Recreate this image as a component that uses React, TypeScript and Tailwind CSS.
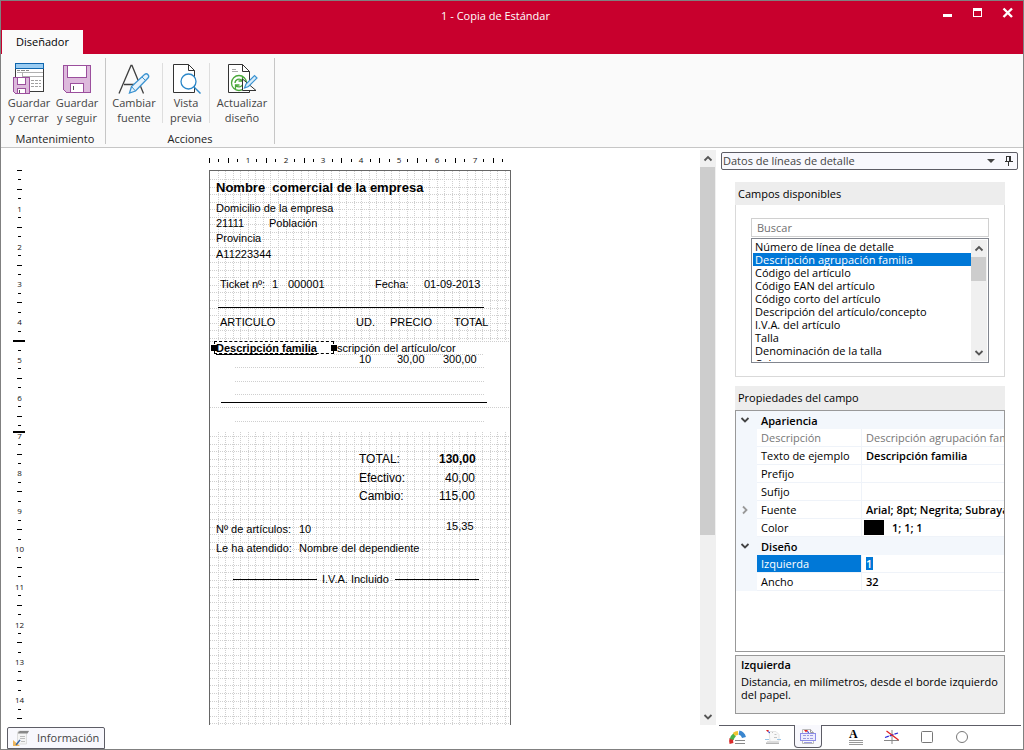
import type { ReactNode } from "react";

const MM = 3.78;
const CM_QUARTER = 9.45;

/* ---------- ribbon icons ---------- */

function SaveCloseIcon() {
  return (
    <svg width="32" height="32" viewBox="0 0 32 32" fill="none" shapeRendering="crispEdges">
      <rect x="2.5" y="0.5" width="28" height="28" fill="#fff" stroke="#3b3b3b" />
      <rect x="2.5" y="0.5" width="28" height="5" fill="#9accf2" stroke="#0f66ae" />
      <path d="M4 7.500h3M8 7.500h4M13 7.500h3" stroke="#8a8a8a" />
      <path d="M4 9.500h26M9.500 10v4M9 13.500h21" stroke="#b0b0b0" />
      <path d="M18 17.500h3M22 17.500h3M26 17.500h2M18 20.500h3M22 20.500h3M26 20.500h2M18 23.500h3M22 23.500h3M26 23.500h2" stroke="#a0a0a0" />
      <path d="M0.500 14.500h16v16h-14l-2-2z" fill="#ddb9dc" stroke="#9b4f9d" />
      <rect x="4.500" y="14.500" width="8" height="7" fill="#fff" stroke="#9b4f9d" />
      <rect x="4.500" y="25.500" width="8" height="5" fill="#fff" stroke="#9b4f9d" />
      <path d="M6.500 27v3" stroke="#555" />
    </svg>
  );
}

function SaveIcon() {
  return (
    <svg width="32" height="32" viewBox="0 0 32 32" fill="none" shapeRendering="crispEdges">
      <path d="M2.500 2.500h27v27h-24l-3-3z" fill="#ddb9dc" stroke="#9b4f9d" />
      <rect x="6.500" y="2.500" width="19" height="12" fill="#fff" stroke="#9b4f9d" />
      <rect x="9.500" y="20.500" width="13" height="9" fill="#fff" stroke="#9b4f9d" />
      <path d="M12.500 23v4" stroke="#555" />
    </svg>
  );
}

function FontIcon() {
  return (
    <svg width="32" height="32" viewBox="0 0 32 32" fill="none">
      <path d="M1 30.500L13 2.500h1L25.500 30.500M6 21.500h16" stroke="#3f3f3f" strokeWidth="1.300" />
      <path d="M11.500 30l2-6.500L26.500 11.500q2-1.500 3.500.2t0 3.300L17.500 28z" fill="#e6f2fb" stroke="#3b93d1" strokeWidth="1.300" />
      <path d="M13.500 23.500l4 4.500M24 14l3.500 3.500" stroke="#3b93d1" />
    </svg>
  );
}

function PreviewIcon() {
  return (
    <svg width="32" height="32" viewBox="0 0 32 32" fill="none">
      <path d="M3.500 1.500h15l6 6v22h-21z" fill="#fff" stroke="#333" />
      <path d="M18.500 1.500v6h6" stroke="#333" />
      <circle cx="18.500" cy="18.500" r="7.500" fill="#fff" stroke="#2b87c9" strokeWidth="1.300" />
      <path d="M24 24l6.500 6.500" stroke="#2b87c9" strokeWidth="1.400" />
    </svg>
  );
}

function RefreshDesignIcon() {
  return (
    <svg width="32" height="32" viewBox="0 0 32 32" fill="none">
      <path d="M2.500 1.500h14l7 7v21h-21z" fill="#fff" stroke="#333" />
      <path d="M16.500 1.500v7h7" stroke="#333" />
      <path d="M6 6.500h4M6 8.500h6" stroke="#aaa" />
      <circle cx="13" cy="20" r="7.500" stroke="#4aa83a" strokeWidth="1.300" />
      <path d="M9 20a4 4 0 0 1 7-2.500M17 20a4 4 0 0 1-7 2.500M16.500 14v4h-4M9.500 26v-4h4" stroke="#4aa83a" strokeWidth="1.300" />
      <path d="M16.500 16v11.500h13.500z" fill="#fff" stroke="#333" />
      <path d="M18.500 25l1.500-4 8.500-8.500 2.500 2.500-8.500 8.500z" fill="#d8ecfa" stroke="#3b93d1" strokeWidth="1.200" />
    </svg>
  );
}

function RibbonButton({ icon, top, bottom, width }: { icon: ReactNode; top: string; bottom: string; width: string }) {
  return (
    <button type="button" className={`flex flex-col items-center text-[#444] ${width}`}>
      {icon}
      <span className="block leading-[15px]">
        {top}
        <br />
        {bottom}
      </span>
    </button>
  );
}

function Ribbon() {
  return (
    <div className="flex h-[94px] shrink-0 border-b border-[#c6c6c6] bg-[#fafafa] pt-1 pb-[3px]">
      <section className="flex flex-col border-r border-[#c6c6c6] pl-1" aria-label="Mantenimiento">
        <div className="flex grow pt-[5px]">
          <RibbonButton icon={<SaveCloseIcon />} top="Guardar" bottom="y cerrar" width="w-12" />
          <RibbonButton icon={<SaveIcon />} top="Guardar" bottom="y seguir" width="w-12" />
          <span className="w-1" />
        </div>
        <h2 className="text-center leading-[11px] text-[#222]">Mantenimiento</h2>
      </section>
      <section className="flex flex-col border-r border-[#c6c6c6]" aria-label="Acciones">
        <div className="flex grow pt-[5px]">
          <RibbonButton icon={<FontIcon />} top="Cambiar" bottom="fuente" width="w-14" />
          <span className="h-[60px] w-px bg-[#dedede]" />
          <RibbonButton icon={<PreviewIcon />} top="Vista" bottom="previa" width="w-[46px]" />
          <span className="h-[60px] w-px bg-[#dedede]" />
          <RibbonButton icon={<RefreshDesignIcon />} top="Actualizar" bottom="diseño" width="w-16" />
        </div>
        <h2 className="text-center leading-[11px] text-[#222]">Acciones</h2>
      </section>
    </div>
  );
}

/* ---------- title bar ---------- */

function TitleBar() {
  return (
    <header className="flex h-[53px] shrink-0 flex-col justify-between bg-[#c8002d]">
      <div className="flex items-start">
        <h1 className="grow pt-[5px] pl-[50px] text-center leading-5 text-white">1 - Copia de Estándar</h1>
        <div className="flex justify-end gap-[14px] pt-1 pr-[7px] text-white">
          <button type="button" aria-label="Minimizar" className="size-4">
            <svg width="16" height="16" shapeRendering="crispEdges"><rect x="3" y="9" width="9" height="3" fill="#fff" /></svg>
          </button>
          <button type="button" aria-label="Maximizar" className="size-4">
            <svg width="16" height="16" shapeRendering="crispEdges">
              <path d="M3 3h9v9h-9z M4 6v5h7v-5z" fill="#fff" fillRule="evenodd" />
            </svg>
          </button>
          <button type="button" aria-label="Cerrar" className="size-4">
            <svg width="16" height="16"><path d="M3.500 3.500l8.500 8.500M12 3.500l-8.500 8.500" stroke="#fff" strokeWidth="2.400" /></svg>
          </button>
        </div>
      </div>
      <nav className="flex pl-px">
        <button type="button" className="h-6 w-[81px] bg-[#fafafa] pt-px text-black">Diseñador</button>
      </nav>
    </header>
  );
}

/* ---------- design surface ---------- */

function VerticalRuler() {
  const ticks = Array.from({ length: 59 }, (_, k) => k);
  return (
    <svg className="mt-[22px] shrink-0 overflow-visible" width="38" height="556" aria-hidden="true" shapeRendering="crispEdges">
      {ticks.map((k) => {
        const y = Math.round(k * CM_QUARTER);
        if (k > 0 && k % 4 === 0) {
          return (
            <text key={k} x="18.500" y={y + 4} textAnchor="middle" fontSize="8" fill="#111">{k / 4}</text>
          );
        }
        const half = k % 2 === 0;
        return <rect key={k} x={half ? 16 : 17} y={y} width={half ? 5 : 3} height="1" fill="#000" />;
      })}
      <rect x="12" y="170" width="12" height="2" fill="#000" />
      <rect x="12" y="261" width="12" height="2" fill="#000" />
    </svg>
  );
}

function HorizontalRuler() {
  const ticks = Array.from({ length: 32 }, (_, k) => k);
  return (
    <svg className="block shrink-0" width="302" height="22" aria-hidden="true" shapeRendering="crispEdges">
      {ticks.map((k) => {
        const x = Math.round(k * CM_QUARTER);
        if (k > 0 && k % 4 === 0) {
          return (
            <text key={k} x={x + 1} y="15" textAnchor="middle" fontSize="8" fill="#111">{k / 4}</text>
          );
        }
        const half = k % 2 === 0;
        return <rect key={k} x={x} y={half ? 10 : 11} width="1" height={half ? 5 : 3} fill="#000" />;
      })}
    </svg>
  );
}

function BandGrid({ from, to, first }: { from: number; to: number; first: number }) {
  const step = MM * 2;
  const cols = Array.from({ length: 39 }, (_, i) => Math.round((i + 1) * step));
  const rows = Array.from({ length: Math.floor((to - first) / step) + 1 }, (_, i) => Math.round(first + i * step));
  return (
    <g stroke="#cfcfcf" strokeDasharray="1 1">
      {cols.map((x) => <line key={`c${x}`} x1={x + 0.5} x2={x + 0.5} y1={from} y2={to} />)}
      {rows.map((y) => <line key={`r${y}`} x1="0" x2="300" y1={y + 0.5} y2={y + 0.5} />)}
    </g>
  );
}

function PaperGrid() {
  const detail = [196, 210, 223, 250];
  return (
    <svg className="absolute inset-0" width="300" height="2000" shapeRendering="crispEdges" aria-hidden="true">
      <BandGrid from={0} to={170} first={8} />
      <g stroke="#cfcfcf" strokeDasharray="1 1">
        <line x1="0" x2="300" y1="170.500" y2="170.500" />
        {detail.map((y) => <line key={y} x1="25" x2="274" y1={y + 0.5} y2={y + 0.5} />)}
        <line x1="124" x2="274" y1="183.500" y2="183.500" />
        <line x1="0" x2="300" y1="236.500" y2="236.500" />
      </g>
      <BandGrid from={261} to={2000} first={265} />
      <g fill="#000">
        <rect x="8" y="136" width="266" height="1" />
        <rect x="11" y="231" width="266" height="1" />
        <rect x="23" y="408" width="84" height="1" />
        <rect x="185" y="408" width="84" height="1" />
      </g>
    </svg>
  );
}

type Field = { x: number; y: number; text: string; style?: string };

const fields: Field[] = [
  { x: 6, y: 9, text: "Nombre  comercial de la empresa", style: "text-[13px] font-bold" },
  { x: 6, y: 29, text: "Domicilio de la empresa" },
  { x: 6, y: 44, text: "21111" },
  { x: 59, y: 44, text: "Población" },
  { x: 6, y: 59, text: "Provincia" },
  { x: 6, y: 75, text: "A11223344" },
  { x: 10, y: 105, text: "Ticket nº:" },
  { x: 62, y: 105, text: "1" },
  { x: 78, y: 105, text: "000001" },
  { x: 165, y: 105, text: "Fecha:" },
  { x: 214, y: 105, text: "01-09-2013" },
  { x: 10, y: 143, text: "ARTICULO" },
  { x: 146, y: 143, text: "UD." },
  { x: 180, y: 143, text: "PRECIO" },
  { x: 244, y: 143, text: "TOTAL" },
  { x: 127, y: 169, text: "scripción del artículo/cor" },
  { x: 149, y: 180, text: "10" },
  { x: 187, y: 180, text: "30,00" },
  { x: 233, y: 180, text: "300,00" },
  { x: 149, y: 280, text: "TOTAL:", style: "text-[12px]" },
  { x: 229, y: 280, text: "130,00", style: "text-[12px] font-bold" },
  { x: 149, y: 299, text: "Efectivo:", style: "text-[12px]" },
  { x: 235, y: 299, text: "40,00", style: "text-[12px]" },
  { x: 149, y: 317, text: "Cambio:", style: "text-[12px]" },
  { x: 229, y: 317, text: "115,00", style: "text-[12px]" },
  { x: 6, y: 350, text: "Nº de artículos:" },
  { x: 89, y: 350, text: "10" },
  { x: 236, y: 347, text: "15,35" },
  { x: 6, y: 369, text: "Le ha atendido:" },
  { x: 89, y: 369, text: "Nombre del dependiente" },
  { x: 112, y: 400, text: "I.V.A. Incluido" },
];

function Paper() {
  return (
    <div className="relative grow overflow-visible border border-b-0 border-[#666] bg-white font-['Liberation_Sans',Arial,sans-serif] text-[11px] leading-4 text-black">
      <PaperGrid />
      {fields.map((f) => (
        <span key={f.text + f.x + f.y} className={`absolute whitespace-pre ${f.style ?? ""}`} style={{ left: f.x, top: f.y }}>
          {f.text}
        </span>
      ))}
      <div className="absolute top-[170px] left-1 h-[13px] w-[120px] border border-dashed border-black bg-white pl-px font-bold leading-[13px] whitespace-nowrap">
        <span className="underline underline-offset-2">Descripción familia</span>
      </div>
      <span className="absolute top-[174px] left-px size-[6px] bg-black" />
      <span className="absolute top-[174px] left-[121px] size-[6px] bg-black" />
    </div>
  );
}

function Chevron({ dir }: { dir: "up" | "down" | "right" }) {
  const d = dir === "up" ? "M1.500 6.500L5 3l3.500 3.500" : dir === "down" ? "M1.500 3L5 6.500 8.500 3" : "M3 1.500L6.500 5 3 8.500";
  return (
    <svg width="10" height="10" viewBox="0 0 10 10" fill="none" aria-hidden="true">
      <path d={d} stroke="currentColor" strokeWidth="1.800" />
    </svg>
  );
}

function ScrollBar({ thumb }: { thumb: string }) {
  return (
    <div className="flex w-4 shrink-0 flex-col bg-[#f0f0f0] text-[#555]">
      <button type="button" aria-label="Subir" className="flex h-[17px] shrink-0 items-center justify-center"><Chevron dir="up" /></button>
      <div className="min-h-0 grow"><div className={`w-[15px] bg-[#cdcdcd] ${thumb}`} /></div>
      <button type="button" aria-label="Bajar" className="flex h-[17px] shrink-0 items-center justify-center"><Chevron dir="down" /></button>
    </div>
  );
}

function DesignSurface() {
  return (
    <div className="flex min-h-0 grow overflow-hidden">
      <div className="flex min-w-0 grow overflow-hidden">
        <VerticalRuler />
        <div className="ml-[170px] flex w-[302px] shrink-0 flex-col">
          <HorizontalRuler />
          <Paper />
        </div>
      </div>
      <div className="flex pt-[2px]"><ScrollBar thumb="h-[68%]" /></div>
    </div>
  );
}

/* ---------- side panel ---------- */

const available = [
  "Número de línea de detalle",
  "Descripción agrupación familia",
  "Código del artículo",
  "Código EAN del artículo",
  "Código corto del artículo",
  "Descripción del artículo/concepto",
  "I.V.A. del artículo",
  "Talla",
  "Denominación de la talla",
  "Color",
];

function SourcePicker() {
  return (
    <div className="mr-[3px] ml-0.5 flex h-[18px] shrink-0 items-center rounded-[2px] border border-[#5d5d66] bg-[#f8f8fd] pr-1">
      <select aria-label="Origen de datos" className="h-4 min-w-0 grow appearance-none bg-transparent pl-px text-[#444] outline-none">
        <option>Datos de líneas de detalle</option>
      </select>
      <svg width="8" height="4" className="mr-[9px]" aria-hidden="true"><path d="M0 0h8l-4 4z" fill="#444" /></svg>
      <button type="button" aria-label="Anclar panel">
        <svg width="9" height="11" viewBox="0 0 9 11" fill="none" stroke="#333" shapeRendering="crispEdges">
          <path d="M2.500 6V0.500h4V6M5.500 1v5M0.500 5.500h8M4.500 6v3.500" />
        </svg>
      </button>
    </div>
  );
}

function AvailableFields() {
  return (
    <section className="shrink-0">
      <h2 className="h-[23px] bg-[#ededed] pl-[3px] leading-[23px] text-black">Campos disponibles</h2>
      <div className="border border-t-0 border-[#d9d9d9] px-[15px] pt-[13px] pb-[13px]">
        <input
          type="text"
          aria-label="Buscar campo"
          placeholder="Buscar"
          className="block h-[19px] w-full border border-[#d0d0d0] px-[5px] pb-px outline-none placeholder:text-[#707070]"
        />
        <div className="mt-px flex h-[125px] border border-[#82868f] p-px">
          <ul role="listbox" aria-label="Campos disponibles" className="min-w-0 grow overflow-hidden text-black">
            {available.map((name, i) => (
              <li
                key={name}
                role="option"
                aria-selected={i === 1}
                className={i === 1 ? "h-[13px] bg-[#0078d7] pl-0.5 leading-[13px] text-white" : "h-[13px] pl-0.5 leading-[13px]"}
              >
                {name}
              </li>
            ))}
          </ul>
          <ScrollBar thumb="h-6" />
        </div>
      </div>
    </section>
  );
}

function CategoryRow({ name }: { name: string }) {
  return (
    <tr className="h-[18px] bg-[#f3f7fc]">
      <td className="pl-1 text-[#444]">
        <button type="button" aria-label={`Contraer ${name}`} className="block"><Chevron dir="down" /></button>
      </td>
      <th colSpan={2} className="pl-1 text-left font-semibold">{name}</th>
    </tr>
  );
}

type PropertyProps = { name: string; value?: string; muted?: boolean; selected?: boolean; expandable?: boolean; swatch?: boolean };

function PropertyRow({ name, value = "", muted, selected, expandable, swatch }: PropertyProps) {
  const id = `prop-${name}`;
  return (
    <tr className="h-[18px]">
      <td className="bg-[#f3f7fc] pl-1 text-[#999]">
        {expandable && <button type="button" aria-label={`Expandir ${name}`} className="block"><Chevron dir="right" /></button>}
      </td>
      <th
        scope="row"
        className={`border-r border-b border-[#eff3f9] pl-1 text-left font-normal whitespace-nowrap ${
          selected ? "bg-[#0078d7] text-white" : muted ? "text-[#777]" : "text-black"
        }`}
      >
        <label htmlFor={id}>{name}</label>
      </th>
      <td className="border-b border-[#eff3f9]">
        <div className="flex items-center">
          {swatch && <span className="mr-1 ml-0.5 h-[15px] w-5 shrink-0 bg-black" />}
          {selected && (
            <span className="ml-1 bg-[#0078d7] font-semibold leading-[13px] text-white">
              <input id={id} defaultValue={value} className="block h-[13px] w-[7px] bg-transparent outline-none" />
            </span>
          )}
          {!selected && (
            <input
              id={id}
              defaultValue={value}
              disabled={muted}
              className={`block h-[17px] w-full min-w-0 bg-transparent pl-1 outline-none ${muted ? "text-[#777]" : "font-semibold text-black"}`}
            />
          )}
        </div>
      </td>
    </tr>
  );
}

function FieldProperties() {
  return (
    <section className="mt-[9px] flex min-h-0 grow flex-col">
      <h2 className="h-6 shrink-0 bg-[#ededed] pl-[3px] leading-6 text-black">Propiedades del campo</h2>
      <div className="min-h-0 grow overflow-hidden border border-[#999]">
        <table className="w-full table-fixed border-separate border-spacing-0 leading-[17px]">
          <colgroup>
            <col className="w-[21px]" />
            <col className="w-[105px]" />
            <col />
          </colgroup>
          <tbody>
            <CategoryRow name="Apariencia" />
            <PropertyRow name="Descripción" value="Descripción agrupación familia" muted />
            <PropertyRow name="Texto de ejemplo" value="Descripción familia" />
            <PropertyRow name="Prefijo" />
            <PropertyRow name="Sufijo" />
            <PropertyRow name="Fuente" value="Arial; 8pt; Negrita; Subrayado" expandable />
            <PropertyRow name="Color" value="1; 1; 1" swatch />
            <CategoryRow name="Diseño" />
            <PropertyRow name="Izquierda" value="1" selected />
            <PropertyRow name="Ancho" value="32" />
          </tbody>
        </table>
      </div>
      <div className="mt-[3px] h-[59px] shrink-0 border border-[#999] bg-[#efefef] px-[5px] pt-[2px] text-black">
        <h3 className="leading-[13px] font-semibold">Izquierda</h3>
        <p className="mt-1 leading-[13px]">Distancia, en milímetros, desde el borde izquierdo del papel.</p>
      </div>
    </section>
  );
}

/* ---------- section tabs ---------- */

function GaugeIcon() {
  return (
    <svg width="18" height="18" viewBox="0 0 18 18" fill="none" strokeWidth="4">
      <path d="M3.500 15.500q-.8-2.500 0-5" stroke="#d92b2b" />
      <path d="M3.700 11.500q.6-3 3-4.700" stroke="#49b04a" />
      <path d="M6 6.500q1.800-1.500 4-1.600" stroke="#f0c431" />
      <path d="M11 4.500q4 .8 5 5" stroke="#3a86cf" />
      <path d="M7 12.500h10M7 15.500h10" stroke="#888" strokeWidth="1" />
    </svg>
  );
}

function HeaderSectionIcon() {
  return (
    <svg width="18" height="18" viewBox="0 0 18 18" fill="none">
      <path d="M5 3.500h7l3 3v7h-9z" fill="#f8f8f8" stroke="#e4e4e4" />
      <path d="M2 2h3l-1.500 2z" fill="#e02020" />
      <path d="M4 3.500l2 1.500" stroke="#2030d0" />
      <path d="M8 4.500h1M10.500 6.500h2M10 9.500h3" stroke="#c4c4c4" />
      <path d="M1 11.500h4M13 11.500h4" stroke="#99c7ea" />
      <path d="M2 14.500h13v1.500h-13z" fill="#b5b5b5" />
      <path d="M3 13.500h11" stroke="#ddd" />
    </svg>
  );
}

function DetailSectionIcon() {
  return (
    <svg width="18" height="18" viewBox="0 0 18 18" fill="none">
      <path d="M3.500 2.500h8l3 3v11h-11z" fill="#fafafa" stroke="#bbb" />
      <path d="M11.500 2.500v3h3" stroke="#999" />
      <path d="M5 3h4l-2 2.500z" fill="#e02020" />
      <path d="M8 4.500l2 1" stroke="#2030d0" />
      <rect x="1.500" y="6.500" width="15" height="7" stroke="#8b8be8" fill="#ececfc" />
      <path d="M4 8.500h3M8 8.500h2M11 8.500h3M4 11.500h3M8 11.500h2M11 11.500h3M5 15.500h8" stroke="#9a9ae0" />
    </svg>
  );
}

function TextIcon() {
  return (
    <span className="flex flex-col leading-none">
      <span className="h-[9px] text-left font-['Liberation_Serif',serif] text-[12px] leading-[9px] font-bold text-black">A</span>
      <svg width="14" height="6" shapeRendering="crispEdges"><path d="M0 1.500h14M0 3.500h14M0 5.500h14" stroke="#999" /></svg>
    </span>
  );
}

function LineIcon() {
  return (
    <svg width="16" height="16" viewBox="0 0 16 16" fill="none">
      <path d="M0 11.500h15M8 1v14" stroke="#888" />
      <path d="M1 8.500L14 4" stroke="#2929d8" strokeWidth="1.300" strokeDasharray="4 1" />
      <path d="M2.500 2l12 9" stroke="#e02020" strokeWidth="1.300" />
    </svg>
  );
}

function SectionTabs() {
  const button = "flex h-[22px] w-7 items-center justify-center";
  return (
    <nav className="flex h-6 shrink-0 border-t border-[#5d5d66] pl-1" aria-label="Secciones">
      <button type="button" aria-label="Datos generales" className={button}><GaugeIcon /></button>
      <span className="w-2" />
      <button type="button" aria-label="Cabecera" className={button}><HeaderSectionIcon /></button>
      <span className="w-[7px]" />
      <button type="button" aria-label="Detalle" className={`-mt-px box-content rounded-b-[4px] border border-t-0 border-[#5d5d66] bg-[#f8f8fd] ${button} max-w-[26px]`}>
        <DetailSectionIcon />
      </button>
      <span className="w-5" />
      <button type="button" aria-label="Texto" className={button}><TextIcon /></button>
      <span className="w-2" />
      <button type="button" aria-label="Línea" className={button}><LineIcon /></button>
      <span className="w-[7px]" />
      <button type="button" aria-label="Rectángulo" className={button}>
        <svg width="12" height="12" fill="none"><rect x="0.500" y="0.500" width="11" height="11" rx="1" stroke="#777" /></svg>
      </button>
      <span className="w-[7px]" />
      <button type="button" aria-label="Elipse" className={button}>
        <svg width="12" height="12" fill="none"><circle cx="6" cy="6" r="5.500" stroke="#777" /></svg>
      </button>
    </nav>
  );
}

function SidePanel() {
  return (
    <aside className="flex w-[302px] shrink-0 flex-col">
      <div className="flex min-h-0 grow flex-col pt-1">
        <SourcePicker />
        <div className="mt-3 mr-4 mb-[11px] ml-4 flex min-h-0 grow flex-col">
          <AvailableFields />
          <FieldProperties />
        </div>
      </div>
      <SectionTabs />
    </aside>
  );
}

function StatusBar() {
  return (
    <div className="flex h-6 shrink-0 items-start pt-[2px] pl-[6px]">
      <button type="button" className="flex h-[22px] w-[98px] items-center gap-2 rounded-t-[2px] border border-[#5d5d66] bg-[#f8f8fd] pl-[5px] text-[#444]">
        <svg width="16" height="18" viewBox="0 0 16 18" fill="none">
          <path d="M4.500 15V4q0-2 2-2h9q-2 0-2 3v10z" fill="#f4f4f4" stroke="#ddd" />
          <path d="M5 4.500q0-2.500 2-2.500h9l-1.500 2.500z" fill="#888" />
          <path d="M7 7.500h5M7 9.500h5M8 12.500h4" stroke="#bbb" />
          <path d="M0 11v6h7z" fill="#eeb65c" />
          <path d="M3 16l4-5" stroke="#3768a8" strokeWidth="1.400" />
        </svg>
        Información
      </button>
    </div>
  );
}

export default function App() {
  return (
    <div className="flex h-screen flex-col overflow-hidden border border-[#808080] bg-white font-['Open_Sans','Noto_Sans',sans-serif] text-[11px]">
      <TitleBar />
      <Ribbon />
      <main className="flex min-h-0 grow pr-0.5">
        <div className="flex min-w-0 grow flex-col">
          <DesignSurface />
          <StatusBar />
        </div>
        <span className="w-[3px]" />
        <SidePanel />
      </main>
    </div>
  );
}
